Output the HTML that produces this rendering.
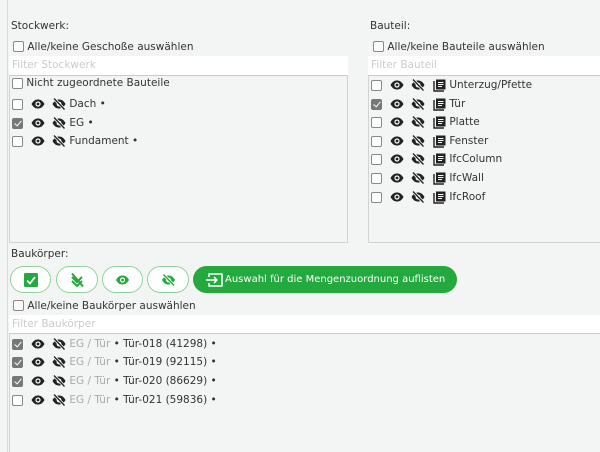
<!DOCTYPE html><html><head><meta charset="utf-8"><style>
html{overflow:hidden;height:452px}
body{margin:0;width:600px;height:452px;background:#f3f5f4;font-family:"DejaVu Sans","Liberation Sans",sans-serif;font-size:10.5px;color:#333;position:relative;overflow:hidden}
.a{position:absolute;white-space:nowrap}
.vl{position:absolute;left:7px;top:0;width:1px;height:452px;background:#d8dcda}
.h{font-size:10.5px;color:#333}
.cb{display:inline-block;width:11px;height:11px;border:1px solid #888;border-radius:2px;background:#fff;vertical-align:-2px;box-sizing:border-box}
.ck{background:#777;border-color:#777;position:relative}
.ck:after{content:"";position:absolute;left:3px;top:0px;width:3px;height:6px;border:solid #fff;border-width:0 1.5px 1.5px 0;transform:rotate(40deg)}
.in{position:absolute;background:#fff;color:#ccc;font-size:10.5px;padding-left:3px;box-sizing:border-box;line-height:19px}
.box{position:absolute;border:1px solid #d0d4d2;border-top:1px solid #c8ccca;background:#f3f5f4;box-sizing:border-box}
.row{position:absolute;display:flex;align-items:center;white-space:nowrap;height:14px}
.row svg{flex:none}
.g{color:#aaa}
.pill{position:absolute;top:266px;height:27px;border:1.5px solid #8fd29a;border-radius:14px;background:#fff;box-sizing:border-box;display:flex;align-items:center;justify-content:center}
.gb{position:absolute;left:193px;top:266px;width:264px;height:27px;background:#23a93d;border-radius:14px;color:#fff;font-size:10px;display:flex;align-items:center;white-space:nowrap;overflow:hidden}
</style></head><body>
<div class="vl"></div>
<svg width="0" height="0" style="position:absolute"><defs>
<symbol id="eye" viewBox="0 0 14 10"><path d="M0.5 5C2.5 1.5 4.5 0.5 7 0.5S11.5 1.5 13.5 5C11.5 8.5 9.5 9.5 7 9.5S2.5 8.5 0.5 5Z" fill="#222"/><circle cx="7" cy="5" r="2.6" fill="#fff"/><circle cx="7" cy="5" r="1.4" fill="#222"/></symbol>
<symbol id="seye" viewBox="0 0 14 12"><path d="M0.5 6C2.5 2.5 4.5 1.5 7 1.5S11.5 2.5 13.5 6C11.5 9.5 9.5 10.5 7 10.5S2.5 9.5 0.5 6Z" fill="#222"/><circle cx="7" cy="6" r="2.4" fill="#fff"/><path d="M2 0.5L12.5 11.5" stroke="#fff" stroke-width="3"/><path d="M2 0.5L12.5 11.5" stroke="#222" stroke-width="1.4"/></symbol>
<symbol id="book" viewBox="0 0 13 13"><path d="M1 2V12H11" fill="none" stroke="#222" stroke-width="1.4"/><rect x="3" y="0.5" width="9.5" height="10" fill="#222"/><path d="M5 3.5H10.5M5 5.5H10.5M5 7.5H9" stroke="#fff" stroke-width="1"/></symbol>
</defs></svg>

<div class="a h" style="left:11px;top:20px">Stockwerk:</div>
<div class="a" style="left:13px;top:41px"><span class="cb"></span> Alle/keine Geschoße auswählen</div>
<div class="in" style="left:9px;top:56px;width:339px;height:19px">Filter Stockwerk</div>
<div class="box" style="left:9px;top:75px;width:339px;height:168px"></div>
<div class="row" style="left:12px;top:76px"><span class="cb"></span>&nbsp;Nicht zugeordnete Bauteile</div>
<div class="row" style="left:12px;top:97px"><span class="cb"></span><svg width="14" height="10" style="margin-left:8px"><use href="#eye"/></svg><svg width="14" height="12" style="margin-left:7px"><use href="#seye"/></svg>&nbsp;Dach •</div>
<div class="row" style="left:12px;top:116px"><span class="cb ck"></span><svg width="14" height="10" style="margin-left:8px"><use href="#eye"/></svg><svg width="14" height="12" style="margin-left:7px"><use href="#seye"/></svg>&nbsp;EG •</div>
<div class="row" style="left:12px;top:134px"><span class="cb"></span><svg width="14" height="10" style="margin-left:8px"><use href="#eye"/></svg><svg width="14" height="12" style="margin-left:7px"><use href="#seye"/></svg>&nbsp;Fundament •</div>

<div class="a h" style="left:370px;top:20px">Bauteil:</div>
<div class="a" style="left:373px;top:41px"><span class="cb"></span> Alle/keine Bauteile auswählen</div>
<div class="in" style="left:368px;top:56px;width:232px;height:19px">Filter Bauteil</div>
<div class="box" style="left:368px;top:75px;width:240px;height:168px"></div>
<div class="row" style="left:371px;top:78px"><span class="cb"></span><svg width="14" height="10" style="margin-left:8px"><use href="#eye"/></svg><svg width="14" height="12" style="margin-left:7px"><use href="#seye"/></svg><svg width="13" height="13" style="margin-left:8px"><use href="#book"/></svg>&nbsp;Unterzug/Pfette</div>
<div class="row" style="left:371px;top:97px"><span class="cb ck"></span><svg width="14" height="10" style="margin-left:8px"><use href="#eye"/></svg><svg width="14" height="12" style="margin-left:7px"><use href="#seye"/></svg><svg width="13" height="13" style="margin-left:8px"><use href="#book"/></svg>&nbsp;Tür</div>
<div class="row" style="left:371px;top:115px"><span class="cb"></span><svg width="14" height="10" style="margin-left:8px"><use href="#eye"/></svg><svg width="14" height="12" style="margin-left:7px"><use href="#seye"/></svg><svg width="13" height="13" style="margin-left:8px"><use href="#book"/></svg>&nbsp;Platte</div>
<div class="row" style="left:371px;top:134px"><span class="cb"></span><svg width="14" height="10" style="margin-left:8px"><use href="#eye"/></svg><svg width="14" height="12" style="margin-left:7px"><use href="#seye"/></svg><svg width="13" height="13" style="margin-left:8px"><use href="#book"/></svg>&nbsp;Fenster</div>
<div class="row" style="left:371px;top:152px"><span class="cb"></span><svg width="14" height="10" style="margin-left:8px"><use href="#eye"/></svg><svg width="14" height="12" style="margin-left:7px"><use href="#seye"/></svg><svg width="13" height="13" style="margin-left:8px"><use href="#book"/></svg>&nbsp;IfcColumn</div>
<div class="row" style="left:371px;top:171px"><span class="cb"></span><svg width="14" height="10" style="margin-left:8px"><use href="#eye"/></svg><svg width="14" height="12" style="margin-left:7px"><use href="#seye"/></svg><svg width="13" height="13" style="margin-left:8px"><use href="#book"/></svg>&nbsp;IfcWall</div>
<div class="row" style="left:371px;top:190px"><span class="cb"></span><svg width="14" height="10" style="margin-left:8px"><use href="#eye"/></svg><svg width="14" height="12" style="margin-left:7px"><use href="#seye"/></svg><svg width="13" height="13" style="margin-left:8px"><use href="#book"/></svg>&nbsp;IfcRoof</div>

<div class="a h" style="left:11px;top:248px">Baukörper:</div>
<div class="pill" style="left:10px;width:41px"><svg width="14" height="14"><rect width="14" height="14" rx="1.5" fill="#23a93d"/><path d="M3 7.5L6 10.5L11 4" fill="none" stroke="#fff" stroke-width="1.8"/></svg></div>
<div class="pill" style="left:56px;width:42px"><svg width="14" height="14"><path d="M2 4L7 9L12 4M2 8L7 13L12 8M2 0.5L13 13.5" fill="none" stroke="#23a93d" stroke-width="2"/></svg></div>
<div class="pill" style="left:102px;width:41px"><svg width="15" height="10" viewBox="0 0 14 10"><path d="M0.5 5C2.5 1.5 4.5 0.5 7 0.5S11.5 1.5 13.5 5C11.5 8.5 9.5 9.5 7 9.5S2.5 8.5 0.5 5Z" fill="#23a93d"/><circle cx="7" cy="5" r="2.6" fill="#fff"/><circle cx="7" cy="5" r="1.4" fill="#23a93d"/></svg></div>
<div class="pill" style="left:147px;width:42px"><svg width="15" height="12" viewBox="0 0 14 12"><path d="M0.5 6C2.5 2.5 4.5 1.5 7 1.5S11.5 2.5 13.5 6C11.5 9.5 9.5 10.5 7 10.5S2.5 9.5 0.5 6Z" fill="#23a93d"/><circle cx="7" cy="6" r="2.4" fill="#fff"/><path d="M2 0.5L12.5 11.5" stroke="#fff" stroke-width="3"/><path d="M2 0.5L12.5 11.5" stroke="#23a93d" stroke-width="1.4"/></svg></div>
<div class="gb"><svg width="18" height="14" style="margin-left:12px;margin-right:2px;flex:none"><path d="M4 4V1H17V13H4V10" fill="none" stroke="#fff" stroke-width="1.5"/><path d="M1 7H12M9 4L12 7L9 10" fill="none" stroke="#fff" stroke-width="1.5"/></svg><span style="padding-right:6px">Auswahl für die Mengenzuordnung auflisten</span></div>
<div class="a" style="left:13px;top:300px"><span class="cb"></span> Alle/keine Baukörper auswählen</div>
<div class="in" style="left:9px;top:315px;width:591px;height:18px;line-height:18px">Filter Baukörper</div>
<div class="box" style="left:9px;top:333px;width:600px;height:119px;border-bottom:none"></div>
<div class="row" style="left:12px;top:337px"><span class="cb ck"></span><svg width="14" height="10" style="margin-left:8px"><use href="#eye"/></svg><svg width="14" height="12" style="margin-left:7px"><use href="#seye"/></svg>&nbsp;<span class="g">EG / Tür</span>&nbsp;• Tür-018 (41298) •</div>
<div class="row" style="left:12px;top:355px"><span class="cb ck"></span><svg width="14" height="10" style="margin-left:8px"><use href="#eye"/></svg><svg width="14" height="12" style="margin-left:7px"><use href="#seye"/></svg>&nbsp;<span class="g">EG / Tür</span>&nbsp;• Tür-019 (92115) •</div>
<div class="row" style="left:12px;top:374px"><span class="cb ck"></span><svg width="14" height="10" style="margin-left:8px"><use href="#eye"/></svg><svg width="14" height="12" style="margin-left:7px"><use href="#seye"/></svg>&nbsp;<span class="g">EG / Tür</span>&nbsp;• Tür-020 (86629) •</div>
<div class="row" style="left:12px;top:393px"><span class="cb"></span><svg width="14" height="10" style="margin-left:8px"><use href="#eye"/></svg><svg width="14" height="12" style="margin-left:7px"><use href="#seye"/></svg>&nbsp;<span class="g">EG / Tür</span>&nbsp;• Tür-021 (59836) •</div>
</body></html>
